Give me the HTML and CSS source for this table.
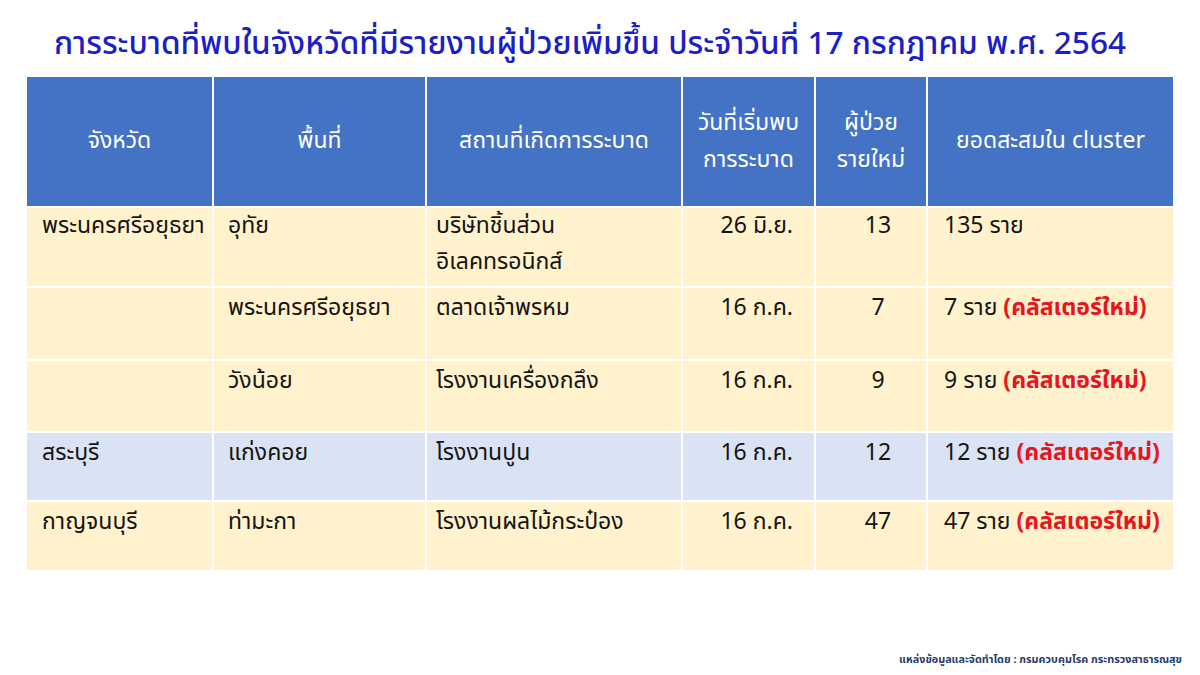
FILE: index.html
```html
<!DOCTYPE html>
<html lang="th">
<head>
<meta charset="utf-8">
<title>การระบาดที่พบในจังหวัด</title>
<link rel="stylesheet" href="styles.css">
</head>
<body>
<div class="page">
  <h1 class="title">การระบาดที่พบในจังหวัดที่มีรายงานผู้ป่วยเพิ่มขึ้น ประจำวันที่ 17 กรกฎาคม พ.ศ. 2564</h1>
  <div class="grid">
    <div class="hd">จังหวัด</div>
    <div class="hd">พื้นที่</div>
    <div class="hd">สถานที่เกิดการระบาด</div>
    <div class="hd">วันที่เริ่มพบ<br>การระบาด</div>
    <div class="hd">ผู้ป่วย<br>รายใหม่</div>
    <div class="hd">ยอดสะสมใน cluster</div>

    <div class="c y r1 left">พระนครศรีอยุธยา</div>
    <div class="c y r1 mid">อุทัย</div>
    <div class="c y r1 place">บริษัทชิ้นส่วน<br>อิเลคทรอนิกส์</div>
    <div class="c y r1 date">26 มิ.ย.</div>
    <div class="c y r1 num">13</div>
    <div class="c y r1 tot">135 ราย</div>

    <div class="c y r2 left"></div>
    <div class="c y r2 mid">พระนครศรีอยุธยา</div>
    <div class="c y r2 place">ตลาดเจ้าพรหม</div>
    <div class="c y r2 date">16 ก.ค.</div>
    <div class="c y r2 num">7</div>
    <div class="c y r2 tot">7 ราย <span class="new">(คลัสเตอร์ใหม่)</span></div>

    <div class="c y r3 left"></div>
    <div class="c y r3 mid">วังน้อย</div>
    <div class="c y r3 place">โรงงานเครื่องกลึง</div>
    <div class="c y r3 date">16 ก.ค.</div>
    <div class="c y r3 num">9</div>
    <div class="c y r3 tot">9 ราย <span class="new">(คลัสเตอร์ใหม่)</span></div>

    <div class="c b r4 left">สระบุรี</div>
    <div class="c b r4 mid">แก่งคอย</div>
    <div class="c b r4 place">โรงงานปูน</div>
    <div class="c b r4 date">16 ก.ค.</div>
    <div class="c b r4 num">12</div>
    <div class="c b r4 tot">12 ราย <span class="new">(คลัสเตอร์ใหม่)</span></div>

    <div class="c y r5 left">กาญจนบุรี</div>
    <div class="c y r5 mid">ท่ามะกา</div>
    <div class="c y r5 place">โรงงานผลไม้กระป๋อง</div>
    <div class="c y r5 date">16 ก.ค.</div>
    <div class="c y r5 num">47</div>
    <div class="c y r5 tot">47 ราย <span class="new">(คลัสเตอร์ใหม่)</span></div>
  </div>
  <div class="source">แหล่งข้อมูลและจัดทำโดย : กรมควบคุมโรค กระทรวงสาธารณสุข</div>
</div>
</body>
</html>
```
FILE: styles.css
```css
* { box-sizing: border-box; }
html, body {
  margin: 0;
  padding: 0;
  background: #ffffff;
}
body {
  width: 1200px;
  height: 675px;
  overflow: hidden;
  font-family: Tahoma, "Noto Sans Thai", "Noto Sans", "DejaVu Sans", sans-serif;
}
.page {
  display: flex;
  flex-direction: column;
  height: 675px;
  padding: 0 0 0 27px;
}
.title {
  margin: 0;
  padding: 22px 20px 0 0;
  height: 77px;
  width: 1146px;
  text-align: center;
  font-size: 31.6px;
  font-weight: 500;
  line-height: 44px;
  color: #1c1fc4;
  white-space: nowrap;
}
.grid {
  display: grid;
  grid-template-columns: 185px 211px 254px 131px 110px 245px;
  grid-template-rows: 129px 78px 71px 70px 67px 68px;
  gap: 2px;
  width: 1146px;
}
.hd {
  background: #4472c4;
  color: #ffffff;
  font-size: 23px;
  line-height: 37px;
  display: flex;
  align-items: center;
  justify-content: center;
  text-align: center;
}
.c {
  font-size: 23px;
  line-height: 36px;
  color: #151515;
  padding-top: 0;
}
.y { background: #fff2cc; }
.b { background: #dae3f3; }
.left { padding-left: 15px; }
.mid { padding-left: 14px; }
.place { padding-left: 9px; }
.date { text-align: right; padding-right: 21px; }
.num { text-align: center; padding-left: 14px; }
.tot { padding-left: 16px; white-space: nowrap; }
.new { color: #e8141e; font-weight: bold; }
.r2, .r3, .r4, .r5 { padding-top: 2px; }
.source {
  margin-top: auto;
  margin-bottom: 7px;
  align-self: flex-end;
  padding-right: 18px;
  font-size: 10.8px;
  font-weight: bold;
  color: #2a3a6a;
}
```
